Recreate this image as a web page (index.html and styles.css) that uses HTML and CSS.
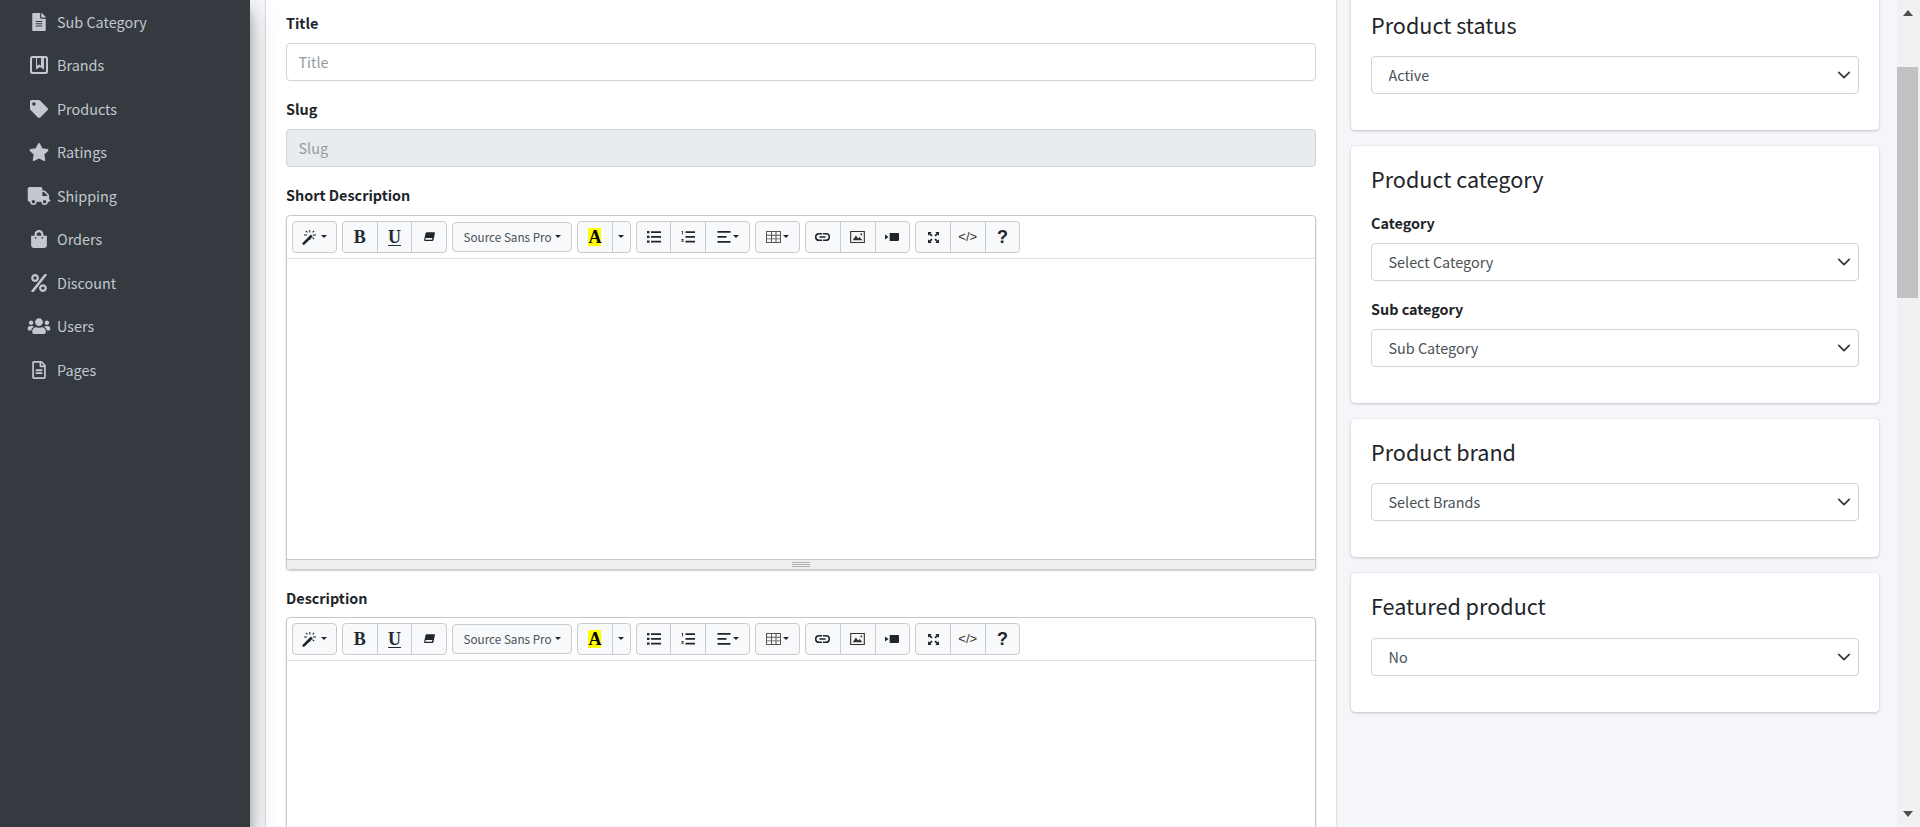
FILE: index.html
```html
<!DOCTYPE html>
<html lang="en">
<head>
<meta charset="utf-8">
<title>Create product</title>
<link rel="stylesheet" href="styles.css">
</head>
<body>
<svg class="defs" width="0" height="0" aria-hidden="true">
  <symbol id="i-file" viewBox="0 0 384 512"><path d="M224 136V0H24C10.7 0 0 10.7 0 24v464c0 13.3 10.7 24 24 24h336c13.3 0 24-10.7 24-24V160H248c-13.2 0-24-10.8-24-24zm64 236c0 6.6-5.4 12-12 12H108c-6.6 0-12-5.4-12-12v-8c0-6.6 5.4-12 12-12h168c6.6 0 12 5.4 12 12v8zm0-64c0 6.6-5.4 12-12 12H108c-6.6 0-12-5.4-12-12v-8c0-6.6 5.4-12 12-12h168c6.6 0 12 5.4 12 12v8zm0-72v8c0 6.6-5.4 12-12 12H108c-6.6 0-12-5.4-12-12v-8c0-6.6 5.4-12 12-12h168c6.6 0 12 5.4 12 12zm96-114.1v6.1H256V0h6.1c6.4 0 12.5 2.5 17 7l97.9 98c4.5 4.5 7 10.6 7 16.9z"/></symbol>
  <symbol id="i-book" viewBox="0 0 18 18"><path fill-rule="evenodd" d="M2.5 0h13A2.5 2.5 0 0 1 18 2.5v13a2.500 2.500 0 0 1-2.500 2.500h-13A2.500 2.500 0 0 1 0 15.500v-13A2.500 2.500 0 0 1 2.500 0zm.5 2a1 1 0 0 0-1 1v12a1 1 0 0 0 1 1h12a1 1 0 0 0 1-1V3a1 1 0 0 0-1-1h-1v11.500l-4-2.600-4 2.600V2H3zm4 0v7.800l2-1.300 2 1.300V2H7z"/></symbol>
  <symbol id="i-tag" viewBox="0 0 512 512"><path d="M0 252.118V48C0 21.49 21.49 0 48 0h204.118a48 48 0 0 1 33.941 14.059l211.882 211.882c18.745 18.745 18.745 49.137 0 67.882L293.823 497.941c-18.745 18.745-49.137 18.745-67.882 0L14.059 286.059A48 48 0 0 1 0 252.118zM112 64c-26.51 0-48 21.49-48 48s21.49 48 48 48 48-21.49 48-48-21.49-48-48-48z"/></symbol>
  <symbol id="i-star" viewBox="0 0 576 512"><path d="M259.3 17.8L194 150.2 47.9 171.5c-26.2 3.8-36.7 36.1-17.7 54.6l105.7 103-25 145.500c-4.500 26.300 23.200 46 46.400 33.700L288 439.600l130.700 68.700c23.200 12.200 50.900-7.400 46.400-33.700l-25-145.500 105.700-103c19-18.500 8.500-50.800-17.700-54.600L382 150.200 316.700 17.800c-11.700-23.600-45.600-23.900-57.400 0z"/></symbol>
  <symbol id="i-truck" viewBox="0 0 640 512"><path d="M624 352h-16V243.900c0-12.700-5.100-24.900-14.100-33.900L494 110.100c-9-9-21.200-14.100-33.900-14.100H416V48c0-26.500-21.500-48-48-48H48C21.500 0 0 21.500 0 48v320c0 26.500 21.500 48 48 48h16c0 53 43 96 96 96s96-43 96-96h128c0 53 43 96 96 96s96-43 96-96h48c8.800 0 16-7.200 16-16v-32c0-8.800-7.200-16-16-16zM160 464c-26.500 0-48-21.500-48-48s21.500-48 48-48 48 21.500 48 48-21.500 48-48 48zm320 0c-26.500 0-48-21.500-48-48s21.500-48 48-48 48 21.500 48 48-21.500 48-48 48zm80-208H416V144h44.100l99.900 99.900V256z"/></symbol>
  <symbol id="i-bag" viewBox="0 0 448 512"><path d="M352 160v-32C352 57.420 294.579 0 224 0 153.420 0 96 57.420 96 128v32H0v272c0 44.183 35.817 80 80 80h288c44.183 0 80-35.817 80-80V160h-96zm-192-32c0-35.290 28.710-64 64-64s64 28.710 64 64v32H160v-32zm160 120c-13.255 0-24-10.745-24-24s10.745-24 24-24 24 10.745 24 24-10.745 24-24 24zm-192 0c-13.255 0-24-10.745-24-24s10.745-24 24-24 24 10.745 24 24-10.745 24-24 24z"/></symbol>
  <symbol id="i-percent" viewBox="0 0 448 512"><path d="M112 224c61.900 0 112-50.100 112-112S173.900 0 112 0 0 50.100 0 112s50.100 112 112 112zm0-160c26.500 0 48 21.500 48 48s-21.500 48-48 48-48-21.500-48-48 21.500-48 48-48zm224 224c-61.900 0-112 50.100-112 112s50.100 112 112 112 112-50.100 112-112-50.100-112-112-112zm0 160c-26.500 0-48-21.500-48-48s21.500-48 48-48 48 21.500 48 48-21.500 48-48 48zM392.300 1l31.500.1c19.400.1 30.900 21.800 20 37.800L77.400 501.600a24 24 0 0 1-20 10.400l-31.500-.1c-19.400-.1-30.900-21.800-20-37.800L372.300 11.400c4.500-6.600 11.900-10.400 20-10.400z"/></symbol>
  <symbol id="i-users" viewBox="0 0 640 512"><path d="M96 224c35.300 0 64-28.700 64-64s-28.700-64-64-64-64 28.700-64 64 28.700 64 64 64zm448 0c35.300 0 64-28.700 64-64s-28.700-64-64-64-64 28.700-64 64 28.700 64 64 64zm32 32h-64c-17.600 0-33.500 7.100-45.100 18.600 40.300 22.100 68.900 62 75.100 109.400h66c17.700 0 32-14.300 32-32v-32c0-35.300-28.700-64-64-64zm-256 0c61.900 0 112-50.100 112-112S381.900 32 320 32 208 82.100 208 144s50.100 112 112 112zm76.800 32h-8.300c-20.800 10-43.900 16-68.500 16s-47.600-6-68.500-16h-8.300C179.600 288 128 339.600 128 403.200V432c0 26.500 21.500 48 48 48h288c26.500 0 48-21.500 48-48v-28.800c0-63.600-51.600-115.200-115.200-115.200zm-223.700-13.400C161.500 263.100 145.600 256 128 256H64c-35.300 0-64 28.700-64 64v32c0 17.700 14.300 32 32 32h65.900c6.300-47.400 34.900-87.300 75.200-109.400z"/></symbol>
  <symbol id="i-filer" viewBox="0 0 384 512"><path d="M288 248v28c0 6.600-5.400 12-12 12H108c-6.600 0-12-5.400-12-12v-28c0-6.600 5.400-12 12-12h168c6.600 0 12 5.400 12 12zm-12 72H108c-6.600 0-12 5.400-12 12v28c0 6.600 5.400 12 12 12h168c6.600 0 12-5.400 12-12v-28c0-6.600-5.400-12-12-12zm108-188.100V464c0 26.500-21.500 48-48 48H48c-26.500 0-48-21.500-48-48V48C0 21.500 21.500 0 48 0h204.100C264.800 0 277 5.100 286 14.100L369.900 98c9 8.900 14.100 21.200 14.100 33.900zm-128-80V128h76.100L256 51.900zM336 464V176H232c-13.300 0-24-10.700-24-24V48H48v416h288z"/></symbol>

  <symbol id="n-magic" viewBox="0 0 16 14"><path d="M8.300 4.200l1.800 1.800L2.400 13.600a1.200 1.200 0 0 1-1.700 0 1.200 1.200 0 0 1 0-1.700z"/><path d="M6.800 0h1v2.300h-1zM6.800 7h1v2.300h-1zM10.200 4.200h3v1h-3zM1.800 4.200h3v1h-3zM3.300 1l.7-.7 1.500 1.500-.7.7zM9.600 7.400l.7-.7 1.500 1.500-.7.7zM9.600 1.800l1.500-1.500.7.7-1.500 1.500z"/></symbol>
  <symbol id="n-eraser" viewBox="0 0 14 12"><path fill-rule="evenodd" d="M4 0h9.200c.5 0 .8.400.7.900l-1.800 8.800c-.2.800-.8 1.300-1.600 1.300H1c-.6 0-1-.5-.9-1.100L1.900 1.700C2.100.7 2.900 0 4 0zM2.100 7.400l-.5 2.200h8.100c.3 0 .6-.2.7-.6l.3-1.600z"/></symbol>
  <symbol id="n-ul" viewBox="0 0 14 12"><path d="M0 0h2.500v2.200H0zM0 4.800h2.500V7H0zM0 9.600h2.500v2.200H0zM4 .2h10v1.800H4zM4 5h10v1.800H4zM4 9.800h10v1.800H4z"/></symbol>
  <symbol id="n-ol" viewBox="0 0 14 12"><path d="M4.500.2H14v1.800H4.500zM4.500 5H14v1.800H4.500zM4.500 9.800H14v1.800H4.500z"/><path d="M1.200 0h.8v3.600h-.8V.9H.6V.4zM.4 8h2.200v.8H1.500l1.100 1.300v.6H.3V10h1.300L.4 8.600z"/></symbol>
  <symbol id="n-align" viewBox="0 0 13 12"><path d="M0 0h13v1.800H0zM0 5h9v1.800H0zM0 10h13v1.800H0z"/></symbol>
  <symbol id="n-table" viewBox="0 0 15 12"><path fill-rule="evenodd" d="M0 0h15v12H0zm1 1v2.800h4V1zm5 0v2.800h3.500V1zm4.500 0v2.800H14V1zM1 4.700v2.700h4V4.700zm5 0v2.700h3.500V4.700zm4.500 0v2.700H14V4.700zM1 8.300V11h4V8.300zm5 0V11h3.500V8.300zm4.500 0V11H14V8.300z"/></symbol>
  <symbol id="n-link" viewBox="0 0 16 9"><path d="M4 0h3.500v1.700H4a2.800 2.800 0 0 0 0 5.600h3.500V9H4a4.500 4.500 0 0 1 0-9zm4.500 0H12a4.500 4.500 0 0 1 0 9H8.500V7.300H12a2.800 2.800 0 0 0 0-5.600H8.500zM4.500 3.600h7v1.800h-7z"/></symbol>
  <symbol id="n-picture" viewBox="0 0 16 13"><path fill-rule="evenodd" d="M0 0h16v13H0zm1.200 1.200v10.600h13.600V1.200z"/><path d="M2.800 10l3.500-5 2.300 3 1.700-1.500 3 3.500zM11.200 2.800h1.800v1.800h-1.800z"/></symbol>
  <symbol id="n-video" viewBox="0 0 15 8" preserveAspectRatio="none"><path d="M5 0h8.800c.7 0 1.200.5 1.200 1.200v5.600c0 .7-.5 1.200-1.200 1.200H5zM0 1.500L3.800 4 0 6.500z"/></symbol>
  <symbol id="n-full" viewBox="0 0 12 12"><path d="M0 0h4L2.700 1.300 5 3.600 3.600 5 1.300 2.700 0 4zM12 0v4l-1.300-1.300L8.400 5 7 3.600l2.300-2.300L8 0zM0 12V8l1.300 1.300L3.600 7 5 8.400l-2.300 2.300L4 12zM12 12H8l1.300-1.300L7 8.400 8.400 7l2.300 2.300L12 8z"/></symbol>
</svg>

<div class="app">
  <aside class="sidebar">
    <nav class="nav">
      <a class="nav-link"><svg class="nav-icon"><use href="#i-file"/></svg><span>Sub Category</span></a>
      <a class="nav-link"><svg class="nav-icon"><use href="#i-book"/></svg><span>Brands</span></a>
      <a class="nav-link"><svg class="nav-icon"><use href="#i-tag"/></svg><span>Products</span></a>
      <a class="nav-link"><svg class="nav-icon"><use href="#i-star"/></svg><span>Ratings</span></a>
      <a class="nav-link"><svg class="nav-icon"><use href="#i-truck"/></svg><span>Shipping</span></a>
      <a class="nav-link"><svg class="nav-icon"><use href="#i-bag"/></svg><span>Orders</span></a>
      <a class="nav-link"><svg class="nav-icon"><use href="#i-percent"/></svg><span>Discount</span></a>
      <a class="nav-link"><svg class="nav-icon"><use href="#i-users"/></svg><span>Users</span></a>
      <a class="nav-link"><svg class="nav-icon"><use href="#i-filer"/></svg><span>Pages</span></a>
    </nav>
  </aside>

  <main class="content">
    <section class="card card-main">
      <div class="form-group">
        <label class="label">Title</label>
        <input class="input" type="text" placeholder="Title">
      </div>
      <div class="form-group">
        <label class="label">Slug</label>
        <input class="input" type="text" placeholder="Slug" disabled>
      </div>
      <div class="form-group">
        <label class="label">Short Description</label>
        <div class="editor">
          <div class="toolbar">
            <div class="btn-group"><button class="btn btn-magic"><svg class="ic ic-magic"><use href="#n-magic"/></svg><i class="caret"></i></button></div>
            <div class="btn-group">
              <button class="btn btn-sq"><span class="serif">B</span></button>
              <button class="btn btn-sq"><span class="serif under">U</span></button>
              <button class="btn btn-sq"><svg class="ic ic-eraser"><use href="#n-eraser"/></svg></button>
            </div>
            <div class="btn-group"><button class="btn btn-font">Source Sans Pro<i class="caret caret-font"></i></button></div>
            <div class="btn-group">
              <button class="btn btn-sq"><span class="serif hilite">A</span></button>
              <button class="btn btn-drop"><i class="caret"></i></button>
            </div>
            <div class="btn-group">
              <button class="btn btn-sq"><svg class="ic ic-list"><use href="#n-ul"/></svg></button>
              <button class="btn btn-sq"><svg class="ic ic-list"><use href="#n-ol"/></svg></button>
              <button class="btn btn-wide"><svg class="ic ic-list"><use href="#n-align"/></svg><i class="caret"></i></button>
            </div>
            <div class="btn-group"><button class="btn btn-magic"><svg class="ic ic-table"><use href="#n-table"/></svg><i class="caret"></i></button></div>
            <div class="btn-group">
              <button class="btn btn-sq"><svg class="ic ic-link"><use href="#n-link"/></svg></button>
              <button class="btn btn-sq"><svg class="ic ic-pic"><use href="#n-picture"/></svg></button>
              <button class="btn btn-sq"><svg class="ic ic-video"><use href="#n-video"/></svg></button>
            </div>
            <div class="btn-group">
              <button class="btn btn-sq"><svg class="ic ic-full"><use href="#n-full"/></svg></button>
              <button class="btn btn-sq btn-code">&lt;/&gt;</button>
              <button class="btn btn-sq btn-help">?</button>
            </div>
          </div>
          <div class="editable"></div>
          <div class="statusbar"><div class="grip"></div></div>
        </div>
      </div>
      <div class="form-group">
        <label class="label label-tight">Description</label>
        <div class="editor">
          <div class="toolbar">
            <div class="btn-group"><button class="btn btn-magic"><svg class="ic ic-magic"><use href="#n-magic"/></svg><i class="caret"></i></button></div>
            <div class="btn-group">
              <button class="btn btn-sq"><span class="serif">B</span></button>
              <button class="btn btn-sq"><span class="serif under">U</span></button>
              <button class="btn btn-sq"><svg class="ic ic-eraser"><use href="#n-eraser"/></svg></button>
            </div>
            <div class="btn-group"><button class="btn btn-font">Source Sans Pro<i class="caret caret-font"></i></button></div>
            <div class="btn-group">
              <button class="btn btn-sq"><span class="serif hilite">A</span></button>
              <button class="btn btn-drop"><i class="caret"></i></button>
            </div>
            <div class="btn-group">
              <button class="btn btn-sq"><svg class="ic ic-list"><use href="#n-ul"/></svg></button>
              <button class="btn btn-sq"><svg class="ic ic-list"><use href="#n-ol"/></svg></button>
              <button class="btn btn-wide"><svg class="ic ic-list"><use href="#n-align"/></svg><i class="caret"></i></button>
            </div>
            <div class="btn-group"><button class="btn btn-magic"><svg class="ic ic-table"><use href="#n-table"/></svg><i class="caret"></i></button></div>
            <div class="btn-group">
              <button class="btn btn-sq"><svg class="ic ic-link"><use href="#n-link"/></svg></button>
              <button class="btn btn-sq"><svg class="ic ic-pic"><use href="#n-picture"/></svg></button>
              <button class="btn btn-sq"><svg class="ic ic-video"><use href="#n-video"/></svg></button>
            </div>
            <div class="btn-group">
              <button class="btn btn-sq"><svg class="ic ic-full"><use href="#n-full"/></svg></button>
              <button class="btn btn-sq btn-code">&lt;/&gt;</button>
              <button class="btn btn-sq btn-help">?</button>
            </div>
          </div>
          <div class="editable"></div>
        </div>
      </div>
    </section>

    <div class="side-col">
      <section class="card card-side">
        <h2 class="card-title">Product status</h2>
        <select class="select"><option>Active</option><option>Block</option></select>
      </section>
      <section class="card card-side">
        <h2 class="card-title">Product category</h2>
        <div class="form-group">
          <label class="label">Category</label>
          <select class="select"><option>Select Category</option></select>
        </div>
        <label class="label">Sub category</label>
        <select class="select"><option>Sub Category</option></select>
      </section>
      <section class="card card-side">
        <h2 class="card-title">Product brand</h2>
        <select class="select"><option>Select Brands</option></select>
      </section>
      <section class="card card-side">
        <h2 class="card-title">Featured product</h2>
        <select class="select"><option>No</option><option>Yes</option></select>
      </section>
    </div>
  </main>

  <div class="scrollbar" aria-hidden="true">
    <div class="sb-arrow"><i class="tri tri-up"></i></div>
    <div class="sb-track"><div class="sb-thumb"></div></div>
    <div class="sb-arrow"><i class="tri tri-down"></i></div>
  </div>
</div>
</body>
</html>
```

FILE: styles.css
```css
* { box-sizing: border-box; }
html, body { height: 100%; }
body {
  margin: 0;
  overflow: hidden;
  font-family: "Noto Sans CJK SC", "Noto Sans", sans-serif;
  font-size: 14.400px;
  line-height: 24px;
  color: #212529;
  background: #f4f6f9;
}
.defs { display: block; height: 0; }

.app { display: flex; height: 827px; overflow: hidden; }

/* sidebar */
.sidebar {
  flex: 0 0 250px;
  background: #343a40;
  box-shadow: 0 14px 28px rgba(0,0,0,.25), 0 10px 10px rgba(0,0,0,.22);
  position: relative;
  z-index: 2;
}
.nav { display: flex; flex-direction: column; gap: 3.500px; margin-top: 1.500px; padding: 0 8px; }
.nav-link {
  display: flex;
  align-items: center;
  height: 40px;
  padding-left: 9px;
  color: #c2c7d0;
  line-height: 24px;
}
.nav-icon {
  flex: 0 0 auto;
  width: 44px;
  height: 18px;
  margin-right: -4px;
  fill: #c2c7d0;
}

/* main area */
.content {
  flex: 1 1 0;
  min-width: 0;
  display: flex;
  align-items: flex-start;
  gap: 15px;
  padding: 0 18px 0 16px;
}
.card {
  background: #fff;
  border-radius: 4px;
  box-shadow: 0 0 1px rgba(0,0,0,.125), 0 1px 3px rgba(0,0,0,.2);
}
.card-main { flex: 0 0 1070px; margin-top: -9px; padding: 20px; }
.side-col { flex: 1 1 0; min-width: 0; display: flex; flex-direction: column; gap: 16px; margin-top: -8px; }
.card-side { padding: 20px; }
.card-title {
  margin: 0 0 18px;
  font-size: 21.600px;
  font-weight: 400;
  line-height: 26.400px;
  color: #212529;
}
.form-group { margin-bottom: 16px; }
.label {
  display: block;
  margin-bottom: 8px;
  font-weight: 700;
  font-size: 14.400px;
  line-height: 24px;
  color: #212529;
}
.label-tight { margin-bottom: 7px; }
.input {
  display: block;
  width: 100%;
  height: 38px;
  padding: 5px 11.500px 7px;
  font: inherit;
  color: #495057;
  background: #fff;
  border: 1px solid #ced4da;
  border-radius: 4px;
  outline: 0;
}
.input::placeholder { color: #939ba2; opacity: 1; }
.input:disabled { background: #e9ecef; }

.select {
  display: block;
  width: 100%;
  height: 38px;
  margin-bottom: 16px;
  padding: 6px 30px 6px 16.500px;
  font: inherit;
  color: #495057;
  background: #fff url("data:image/svg+xml,%3csvg xmlns='http://www.w3.org/2000/svg' viewBox='0 0 16 16'%3e%3cpath fill='none' stroke='%23343a40' stroke-linecap='round' stroke-linejoin='round' stroke-width='2' d='M2 5l6 6 6-6'/%3e%3c/svg%3e") no-repeat right 7px center / 14px 14px;
  border: 1px solid #ced4da;
  border-radius: 4px;
  appearance: none;
  outline: 0;
}

/* summernote */
.editor {
  border: 1px solid #c8c8c8;
  border-radius: 4px;
  box-shadow: 0 1px 2px rgba(0,0,0,.2);
}
.toolbar {
  display: flex;
  gap: 5px;
  align-items: center;
  height: 43px;
  padding: 0 5px;
  border-bottom: 1px solid #dee2e6;
}
.btn-group { display: flex; height: 32px; }
.btn {
  display: flex;
  align-items: center;
  justify-content: center;
  gap: 2px;
  height: 32px;
  margin: 0 0 0 -1px;
  padding: 0;
  font: inherit;
  color: #343a40;
  background: #f8f9fa;
  border: 1px solid #c8cbcf;
}
.btn:first-child { margin-left: 0; border-radius: 4px 0 0 4px; }
.btn:last-child { border-radius: 0 4px 4px 0; }
.btn:only-child { border-radius: 4px; }
.btn-sq { width: 35.700px; }
.btn-wide { width: 45px; }
.btn-magic { width: 45px; }
.btn-drop { width: 19px; }
.btn-font { width: 120px; height: 30px; margin-top: 1px; font-size: 11.700px; color: #495057; }
.caret {
  display: inline-block;
  width: 0;
  height: 0;
  border-top: 3.500px solid #212529;
  border-left: 3.500px solid transparent;
  border-right: 3.500px solid transparent;
  margin-bottom: 2px;
}
.caret-font { margin-left: 1px; }
.ic { display: block; fill: #212529; flex: 0 0 auto; }
.ic-magic { width: 17px; height: 15px; }
.ic-eraser { width: 11px; height: 10px; }
.ic-list { width: 14px; height: 12px; }
.ic-table { width: 15px; height: 12px; fill: #555; }
.ic-link { width: 15px; height: 8px; }
.ic-pic { width: 15px; height: 12px; fill: #333; }
.ic-video { width: 14px; height: 8px; }
.ic-full { width: 11px; height: 11px; }
.serif { font-family: "Liberation Serif", serif; font-weight: 700; font-size: 18px; line-height: 18px; color: #212933; }
.under { text-decoration: underline; text-decoration-thickness: 1px; text-underline-offset: 2px; }
.hilite { display: block; width: 13px; height: 18px; line-height: 19px; text-align: center; background: #ff0; color: #000; }
.btn-code { font-family: "Liberation Sans", sans-serif; font-size: 13px; color: #333; }
.btn-help { font-family: "Liberation Sans", sans-serif; font-size: 18px; font-weight: 700; color: #212529; }
.editable { height: 300px; background: #fff; }
.statusbar {
  display: flex;
  align-items: center;
  justify-content: center;
  height: 10px;
  background: #efefef;
  border-top: 1px solid #c8c8c8;
  border-radius: 0 0 3px 3px;
}
.grip { width: 18px; height: 5px; border-top: 1px solid #b0b0b0; border-bottom: 1px solid #b0b0b0; }
.grip::after { content: ""; display: block; height: 1px; margin-top: 1px; background: #b0b0b0; }

/* scrollbar */
.scrollbar {
  flex: 0 0 23px;
  display: flex;
  flex-direction: column;
  background: #f1f1f1;
  padding-right: 2px;
}
.sb-arrow { flex: 0 0 26px; display: flex; align-items: center; justify-content: center; }
.sb-track { flex: 1 1 0; padding-top: 41px; }
.sb-thumb { height: 231px; background: #c1c1c1; }
.tri { width: 0; height: 0; border-left: 5.500px solid transparent; border-right: 5.500px solid transparent; }
.tri-up { border-bottom: 6px solid #505050; }
.tri-down { border-top: 6px solid #505050; }
```
